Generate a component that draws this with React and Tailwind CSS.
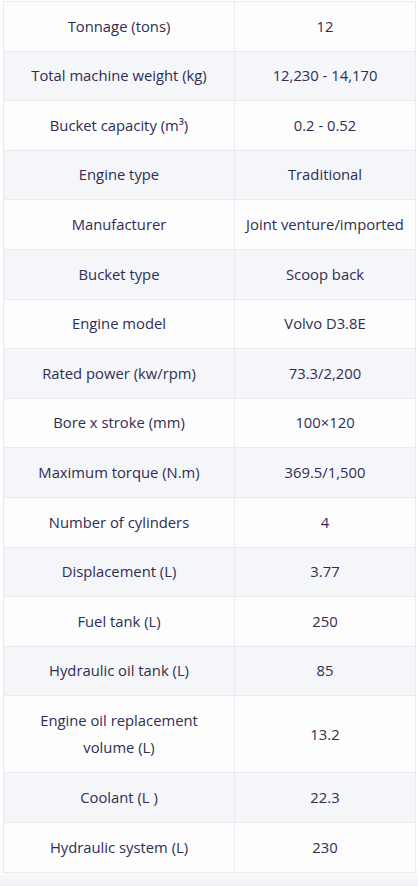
const rows = [
  ["Tonnage (tons)", "12"],
  ["Total machine weight (kg)", "12,230 - 14,170"],
  ["Bucket capacity (m³)", "0.2 - 0.52"],
  ["Engine type", "Traditional"],
  ["Manufacturer", "Joint venture/imported"],
  ["Bucket type", "Scoop back"],
  ["Engine model", "Volvo D3.8E"],
  ["Rated power (kw/rpm)", "73.3/2,200"],
  ["Bore x stroke (mm)", "100×120"],
  ["Maximum torque (N.m)", "369.5/1,500"],
  ["Number of cylinders", "4"],
  ["Displacement (L)", "3.77"],
  ["Fuel tank (L)", "250"],
  ["Hydraulic oil tank (L)", "85"],
  ["Engine oil replacement volume (L)", "13.2"],
  ["Coolant (L )", "22.3"],
  ["Hydraulic system (L)", "230"],
];

export default function App() {
  return (
    <div
      className="min-h-[886px] bg-gradient-to-b from-white from-[98%] to-[#eef0f7] pt-[1px] pl-[3px] pr-[2px] text-[#2f2d52]"
      style={{ fontFamily: '"Open Sans", "Noto Sans", sans-serif' }}
    >
      <table className="w-[413px] border-collapse text-[14.8px] leading-[27.4px]">
        <tbody>
          {rows.map(([label, value], i) => (
            <tr key={label} className={i % 2 ? "bg-[#f5f6fa]" : "bg-[#fdfdfe]"}>
              <td className="w-[231px] border border-[#ebebef] px-3 py-[10.6px] text-center">
                {label}
              </td>
              <td className="border border-[#ebebef] px-1 py-[10.6px] text-center">
                {value}
              </td>
            </tr>
          ))}
        </tbody>
      </table>
    </div>
  );
}
